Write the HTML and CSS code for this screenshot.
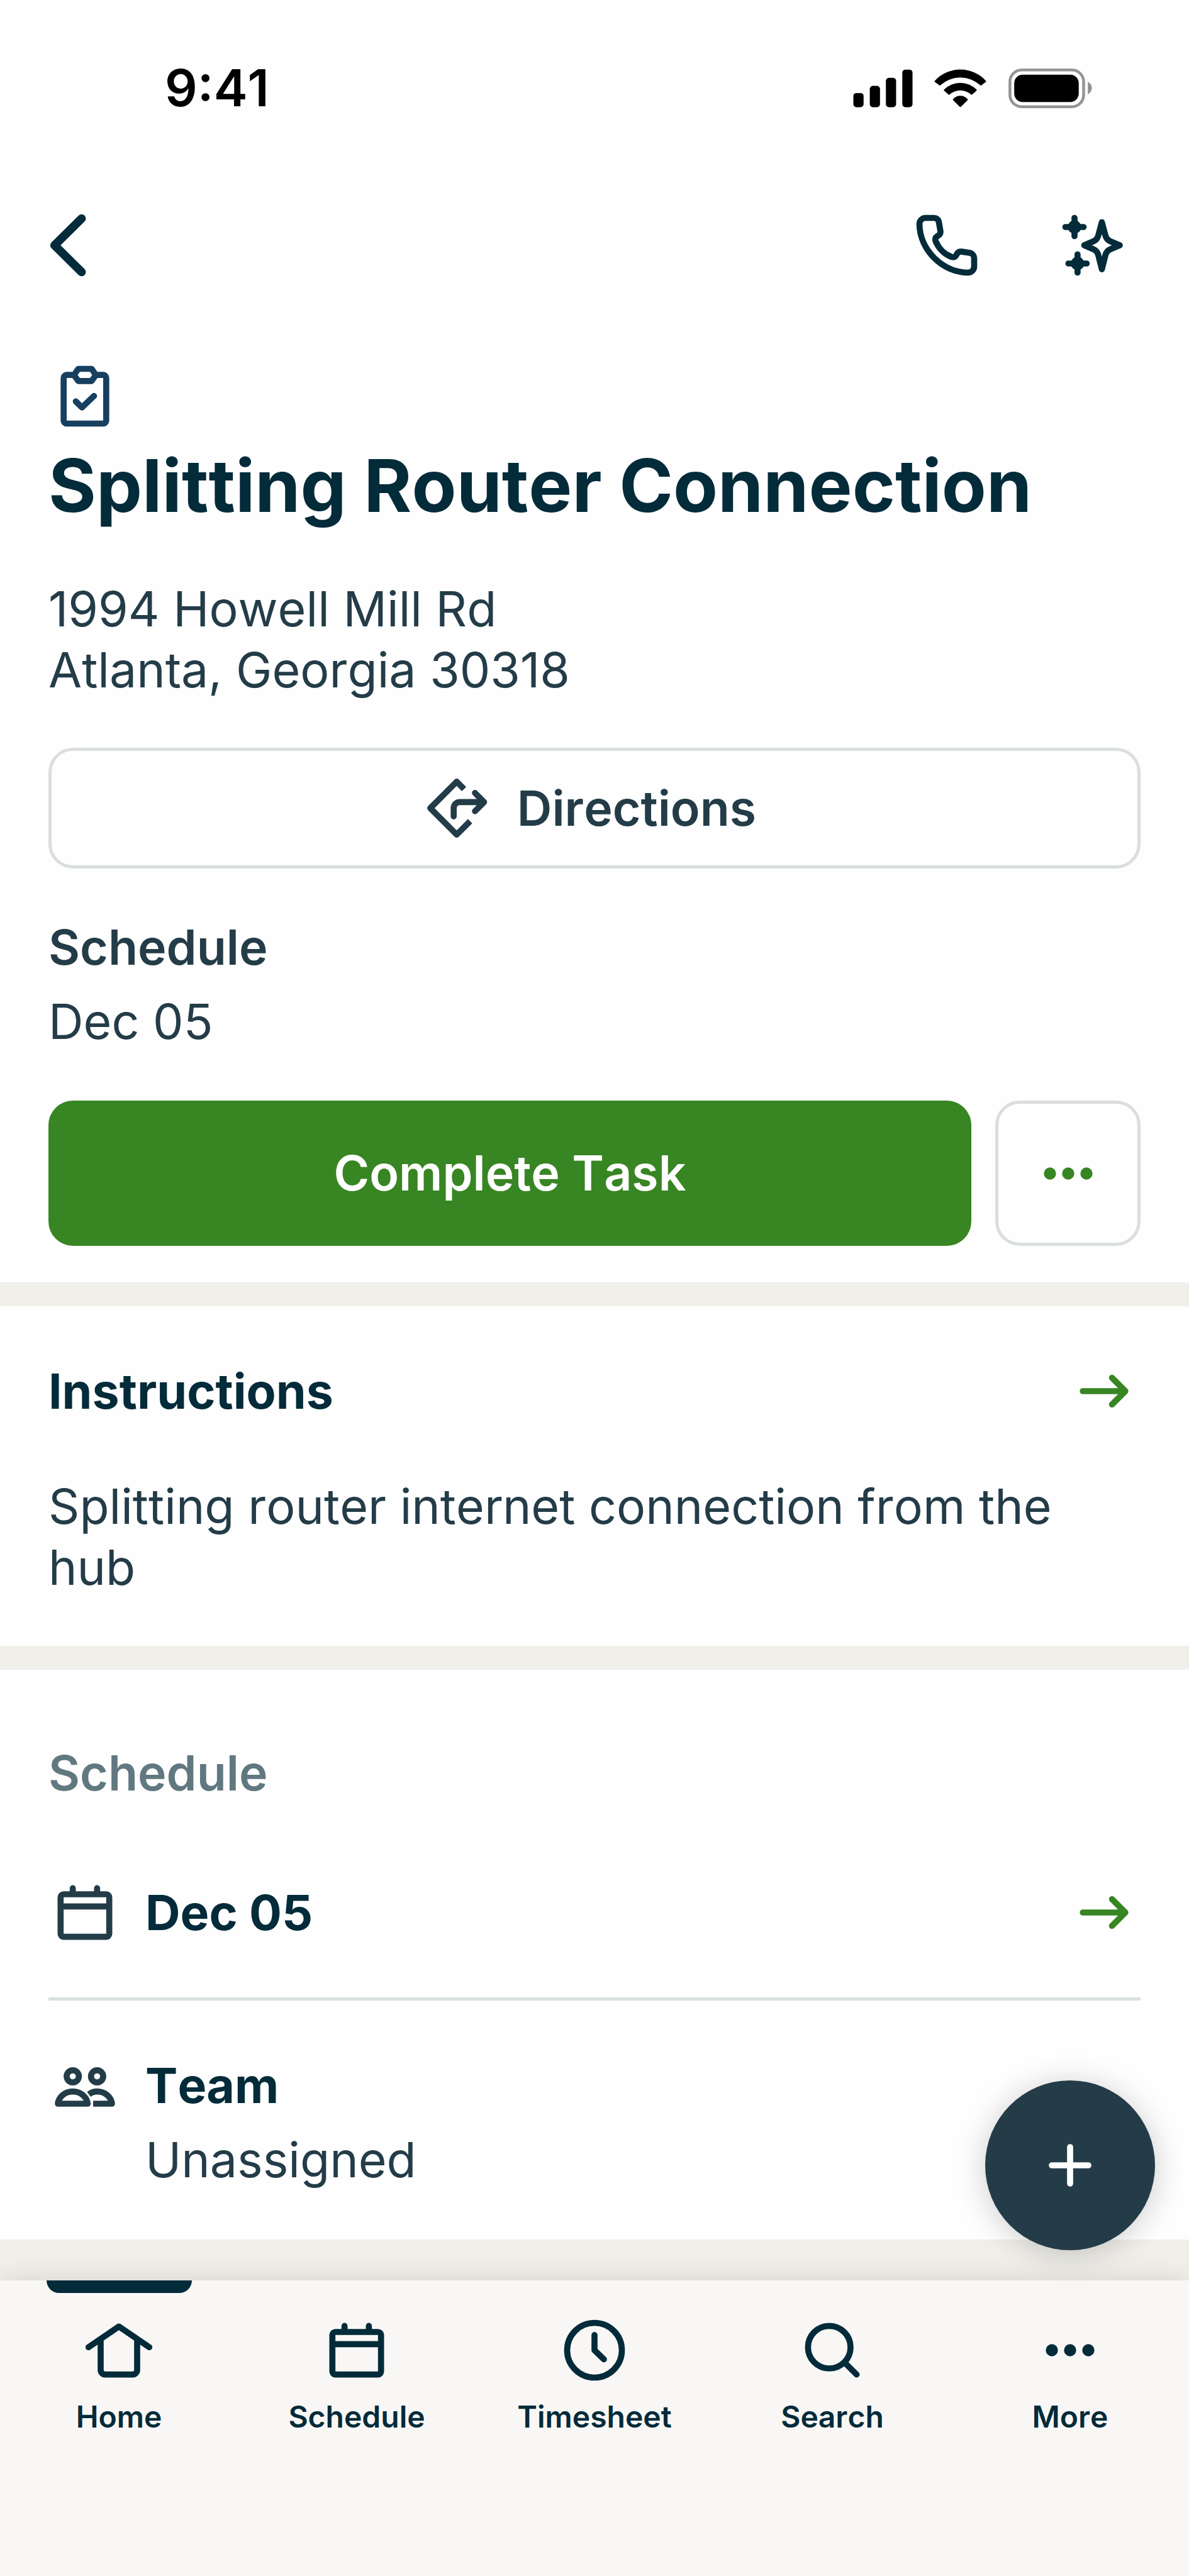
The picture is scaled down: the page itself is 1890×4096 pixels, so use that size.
FILE: index.html
```html
<!DOCTYPE html>
<html lang="en">
<head>
<meta charset="utf-8">
<meta name="viewport" content="width=device-width, initial-scale=1">
<title>Splitting Router Connection</title>
<link rel="stylesheet" href="styles.css">
</head>
<body>
<main class="screen">
  <section class="panel panel-task">
    <div class="status">
      <span class="time">9:41</span>
      <svg class="status-icons" viewBox="0 0 386 66" aria-hidden="true">
        <rect x="0.5" y="40.5" width="16.5" height="23" rx="5"/>
        <rect x="27" y="29" width="16.5" height="34.500" rx="5"/>
        <rect x="53" y="16" width="16.500" height="47.500" rx="5"/>
        <rect x="79.500" y="2.700" width="16.500" height="60.800" rx="5"/>
        <path d="M132 20.700A55.700 55.700 0 0 1 214.400 20.700Q215.400 21.700 214.400 22.700L207.400 28Q206.400 29 205.400 28A47.600 47.600 0 0 0 141 28Q140 29 139 28L132 22.700Q131 21.700 132 20.700Z"/>
        <path d="M147.100 34.800A37 37 0 0 1 199.300 34.800Q200.300 35.800 199.300 36.800L192.400 43Q191.400 44 190.400 43A25.500 25.500 0 0 0 156 43Q155 44 154 43L147.100 36.800Q146.100 35.800 147.100 34.800Z"/>
        <path d="M162 49.700A15.500 15.500 0 0 1 184.400 49.700Q185.900 51 184.600 52.300L174.200 62.800Q173.200 63.800 172.200 62.800L161.800 52.300Q160.500 51 162 49.700Z"/>
        <rect x="253.300" y="3.300" width="119" height="59.400" rx="19" fill="none" stroke="#949494" stroke-width="4.600"/>
        <rect x="260.200" y="11" width="104.200" height="44" rx="13.500"/>
        <path d="M379 22.700V42.300C383 40.800 385.500 37 385.500 32.500S383 24.200 379 22.700Z" fill="#949494"/>
      </svg>
    </div>
    <header class="topbar">
      <button class="icon-btn" type="button" aria-label="Back">
        <svg class="icon" viewBox="0 0 24 24"><path d="M10.900 3.200L2 12l8.900 8.800" stroke-width="2.800"/></svg>
      </button>
      <div class="topbar-actions">
        <button class="icon-btn" type="button" aria-label="Call">
          <svg class="icon" viewBox="0 0 24 24"><path d="M5 3h2.800a1.600 1.600 0 0 1 1.600 1.400l.5 2.900c.1.700-.2 1.200-.7 1.500-.9.500-1.200 1.100-.8 2 1 2.300 2.900 4.200 5.100 5 .9.300 1.400 0 1.800-.9.300-.6.900-.9 1.600-.8l2.600.4A1.800 1.800 0 0 1 21 16.300V19a2 2 0 0 1-2 2C10.500 20.900 3.100 13.500 3 5a2 2 0 0 1 2-2Z"/></svg>
        </button>
        <button class="icon-btn" type="button" aria-label="Assistant">
          <svg class="icon" viewBox="0 0 24 24"><path d="M15 4.400l1.200 4.500q.4 1.300 1.600 1.800l3.100 1.300-3.100 1.300q-1.200.5-1.600 1.800L15 19.900l-1.200-4.800q-.4-1.300-1.600-1.800L9.200 12l3-1.300q1.200-.5 1.600-1.800ZM6 3v6M3 6h6M7 15v6M4 18h6"/><circle cx="6" cy="6" r="2.200" class="solid"/><circle cx="7" cy="18" r="2.200" class="solid"/></svg>
        </button>
      </div>
    </header>
    <svg class="icon task-icon" viewBox="0 0 24 24" aria-hidden="true"><path d="M8.500 5H6a1 1 0 0 0-1 1v14a1 1 0 0 0 1 1h12a1 1 0 0 0 1-1V6a1 1 0 0 0-1-1h-2.500M9.800 3h4.400l1.400 2-1.400 2H9.800L8.400 5ZM9 13.700l2 2 4-3.800"/></svg>
    <h1 class="title">Splitting Router Connection</h1>
    <address class="address">1994 Howell Mill Rd<br>Atlanta, Georgia 30318</address>
    <button class="btn btn-outline btn-directions" type="button">
      <svg class="icon" viewBox="0 0 24 24" aria-hidden="true"><path d="M14.400 5.700L12 3.300 3.300 12l8.700 8.700 4.400-4.400" stroke-linecap="butt"/><path d="M11 14.700V12a2 2 0 0 1 2-2h7.800M18 7l3 3-3 3"/></svg>
      <span class="btn-label">Directions</span>
    </button>
    <div class="fact">
      <h2 class="strong">Schedule</h2>
      <p>Dec 05</p>
    </div>
    <div class="actions">
      <button class="btn btn-primary" type="button">Complete Task</button>
      <button class="btn btn-outline btn-more" type="button" aria-label="More actions">
        <svg class="icon dots" viewBox="0 0 24 24"><circle cx="6" cy="12" r="2"/><circle cx="12" cy="12" r="2"/><circle cx="18" cy="12" r="2"/></svg>
      </button>
    </div>
  </section>

  <section class="panel panel-text">
    <a class="row" href="#instructions">
      <h2 class="heading">Instructions</h2>
      <svg class="icon arrow" viewBox="0 0 24 24" aria-hidden="true"><path d="M5 12h14M14.600 7.600L19 12l-4.400 4.400"/></svg>
    </a>
    <p>Splitting router internet connection from the hub</p>
  </section>

  <section class="panel panel-schedule">
    <h2 class="strong muted">Schedule</h2>
    <a class="row row-date" href="#date">
      <svg class="icon" viewBox="0 0 24 24" aria-hidden="true"><path d="M5 6h14a1 1 0 0 1 1 1v12a1 1 0 0 1-1 1H5a1 1 0 0 1-1-1V7a1 1 0 0 1 1-1ZM4 10h16M8 4v2M16 4v2"/></svg>
      <span class="heading row-label">Dec 05</span>
      <svg class="icon arrow" viewBox="0 0 24 24" aria-hidden="true"><path d="M5 12h14M14.600 7.600L19 12l-4.400 4.400"/></svg>
    </a>
    <div class="row row-team">
      <svg class="icon" viewBox="0 0 24 24" aria-hidden="true"><circle cx="8" cy="9" r="2"/><circle cx="16" cy="9" r="2"/><path d="M3.100 18c.3-2.300 2.300-4 4.900-4s4.600 1.700 4.900 4Z"/><path d="M13.300 14.900c.8-.6 1.700-.9 2.700-.9 2.600 0 4.600 1.700 4.900 4h-6.200" stroke-linecap="butt"/></svg>
      <div class="fact fact-team">
        <h3 class="heading">Team</h3>
        <p>Unassigned</p>
      </div>
    </div>
  </section>
</main>

<footer class="dock">
  <button class="fab" type="button" aria-label="Create">
    <svg class="icon" viewBox="0 0 24 24"><path d="M12 6v12M6 12h12"/></svg>
  </button>
  <nav class="tabs">
    <a class="tab tab-active" href="#home" aria-current="page">
      <svg class="icon" viewBox="0 0 24 24" aria-hidden="true"><path d="M2 11L12 4.200 22 11M6 8.800V18.500a1.500 1.500 0 0 0 1.500 1.500h9a1.500 1.500 0 0 0 1.500-1.500V8.800"/></svg>
      <span>Home</span>
    </a>
    <a class="tab" href="#schedule">
      <svg class="icon" viewBox="0 0 24 24" aria-hidden="true"><path d="M5 6h14a1 1 0 0 1 1 1v12a1 1 0 0 1-1 1H5a1 1 0 0 1-1-1V7a1 1 0 0 1 1-1ZM4 10h16M8 4v2M16 4v2"/></svg>
      <span>Schedule</span>
    </a>
    <a class="tab" href="#timesheet">
      <svg class="icon" viewBox="0 0 24 24" aria-hidden="true"><circle cx="12" cy="12" r="9"/><path d="M12 7v5l3.100 3"/></svg>
      <span>Timesheet</span>
    </a>
    <a class="tab" href="#search">
      <svg class="icon" viewBox="0 0 24 24" aria-hidden="true"><circle cx="11" cy="11" r="7"/><path d="M16 16l4 4"/></svg>
      <span>Search</span>
    </a>
    <a class="tab" href="#more">
      <svg class="icon dots" viewBox="0 0 24 24" aria-hidden="true"><circle cx="6" cy="12" r="2"/><circle cx="12" cy="12" r="2"/><circle cx="18" cy="12" r="2"/></svg>
      <span>More</span>
    </a>
  </nav>
</footer>
</body>
</html>
```
FILE: styles.css
```css
:root {
  --ink: #032b3a;
  --text: #233c48;
  --muted: #617880;
  --green: #388523;
  --line: #dadede;
  --band: #f0efea;
  --gutter: 77px;
}

* {
  box-sizing: border-box;
}

body {
  margin: 0;
  min-height: 100vh;
  display: flex;
  flex-direction: column;
  background: var(--band);
  color: var(--text);
  font: 400 77px/97px Inter, "Liberation Sans", sans-serif;
  font-optical-sizing: none;
  font-kerning: none;
}

h1, h2, h3, p, address {
  margin: 0;
  font-size: inherit;
  font-style: normal;
}

a {
  color: inherit;
  text-decoration: none;
}

button {
  margin: 0;
  padding: 0;
  border: 0;
  background: none;
  color: inherit;
  font: inherit;
}

.icon {
  display: block;
  flex: none;
  width: 116px;
  height: 116px;
  fill: none;
  stroke: currentColor;
  stroke-width: 2;
  stroke-linecap: round;
  stroke-linejoin: round;
}

.icon .solid,
.dots {
  fill: currentColor;
  stroke: none;
}

.screen {
  display: flex;
  flex-direction: column;
  gap: 38px;
}

.panel {
  padding: 77px var(--gutter) 76px;
  background: #fefefe;
}

.panel-task {
  display: flex;
  flex-direction: column;
  padding-top: 92px;
  padding-bottom: 58px;
}

.status {
  display: flex;
  align-items: center;
  justify-content: space-between;
  padding: 0 77px 0 185px;
  color: #000;
}

.time {
  font-size: 81px;
  font-weight: 600;
}

.status-icons {
  display: block;
  width: 380px;
  height: 65px;
}

.topbar,
.topbar-actions {
  display: flex;
  justify-content: space-between;
  color: var(--ink);
}

.topbar {
  margin-top: 143px;
  padding-right: 18px;
}

.topbar-actions {
  gap: 116px;
}

.task-icon {
  margin-top: 124px;
  color: #173f60;
}

.title {
  margin-top: 12px;
  color: var(--ink);
  font-size: 116px;
  font-weight: 700;
  line-height: 145px;
}

.address {
  margin-top: 75px;
}

.btn {
  display: flex;
  align-items: center;
  justify-content: center;
  border-radius: 39px;
  font-weight: 600;
}

.btn-outline {
  border: 5px solid var(--line);
}

.btn-directions {
  margin: 75px 0 77px;
  height: 192px;
  gap: 38px;
}

.btn-label {
  padding-right: 20px;
}

.fact {
  display: flex;
  flex-direction: column;
  gap: 21px;
}

.strong {
  font-weight: 600;
}

.heading {
  color: var(--ink);
  font-weight: 700;
}

.muted {
  color: var(--muted);
}

.actions {
  display: flex;
  gap: 38px;
  margin-top: 77px;
}

.btn-primary {
  flex: 1;
  height: 231px;
  background: var(--green);
  color: #fff;
}

.btn-more {
  width: 231px;
  height: 231px;
  color: var(--green);
}

.row {
  display: flex;
  align-items: center;
  gap: 38px;
}

.arrow {
  margin-left: auto;
  color: var(--green);
}

.panel-text {
  display: flex;
  flex-direction: column;
  gap: 77px;
}

.panel-schedule {
  padding-top: 116px;
  padding-bottom: 78px;
}

.row-date {
  padding: 115px 0 77px;
  border-bottom: 5px solid var(--line);
}

.row-team {
  align-items: flex-start;
  padding-top: 77px;
}

.fact-team {
  padding-top: 10px;
}

.dock {
  position: relative;
  margin-top: auto;
  background: #f9f7f5;
  box-shadow: 0 0 40px rgba(0, 0, 0, 0.12);
  color: var(--ink);
}

.fab {
  position: absolute;
  right: 54px;
  bottom: calc(100% + 48px);
  display: grid;
  place-items: center;
  width: 270px;
  height: 270px;
  border-radius: 50%;
  background: #243c48;
  color: #fff;
  box-shadow: 0 5px 50px rgba(0, 0, 0, 0.2);
}

.tabs {
  display: grid;
  grid-template-columns: repeat(5, 1fr);
  padding-bottom: 224px;
}

.tab {
  position: relative;
  display: flex;
  flex-direction: column;
  align-items: center;
  gap: 19px;
  padding-top: 53px;
  font-size: 48px;
  font-weight: 600;
  line-height: 58px;
}

/* marker over the current tab */
.tab-active::before {
  content: "";
  position: absolute;
  top: 0;
  width: 231px;
  height: 20px;
  border-radius: 0 0 20px 20px;
  background: var(--ink);
}
```
